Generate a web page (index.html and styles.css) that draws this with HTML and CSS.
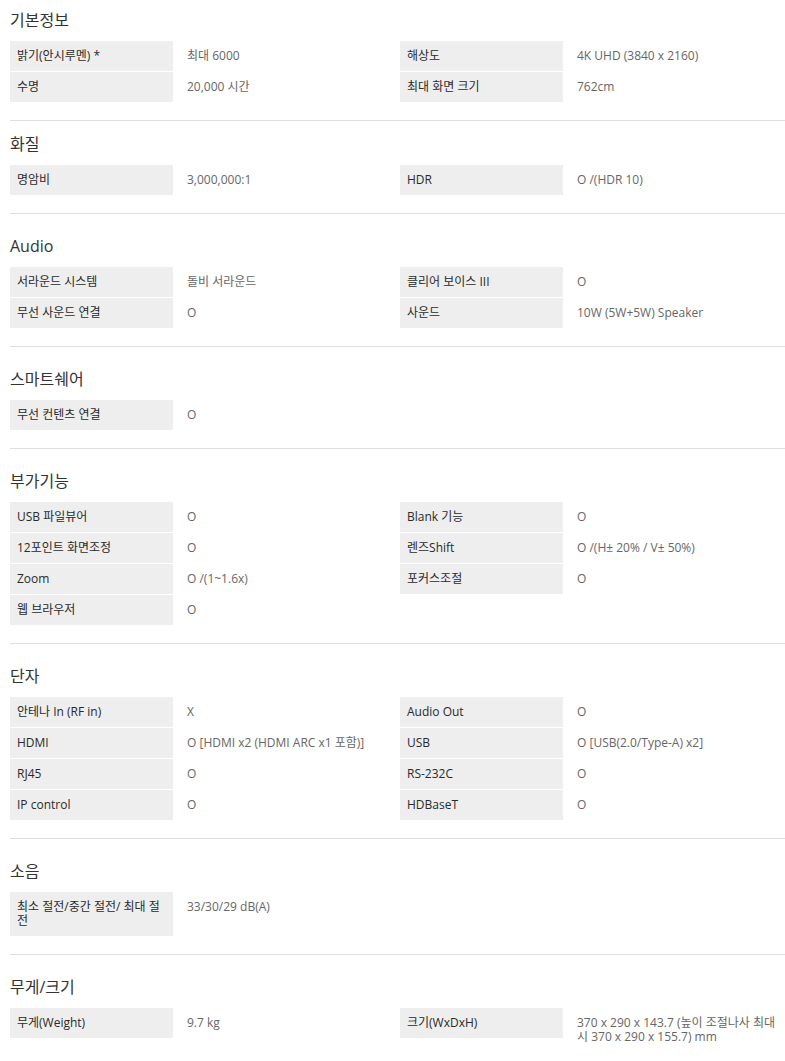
FILE: index.html
```html
<!DOCTYPE html>
<html lang="ko">
<head>
<meta charset="utf-8">
<title>제품 사양</title>
<link rel="stylesheet" href="styles.css">
</head>
<body>
<div class="specs">
  <section class="spec-section spec-section--first">
    <h2 class="spec-title">기본정보</h2>
    <dl class="spec-grid">
      <dt class="spec-label">밝기(안시루멘) *</dt><dd class="spec-value">최대 6000</dd>
      <dt class="spec-label">해상도</dt><dd class="spec-value">4K UHD (3840 x 2160)</dd>
      <dt class="spec-label">수명</dt><dd class="spec-value">20,000 시간</dd>
      <dt class="spec-label">최대 화면 크기</dt><dd class="spec-value">762cm</dd>
    </dl>
  </section>

  <section class="spec-section spec-section--tight">
    <h2 class="spec-title">화질</h2>
    <dl class="spec-grid">
      <dt class="spec-label">명암비</dt><dd class="spec-value">3,000,000:1</dd>
      <dt class="spec-label">HDR</dt><dd class="spec-value">O /(HDR 10)</dd>
    </dl>
  </section>

  <section class="spec-section">
    <h2 class="spec-title">Audio</h2>
    <dl class="spec-grid">
      <dt class="spec-label">서라운드 시스템</dt><dd class="spec-value">돌비 서라운드</dd>
      <dt class="spec-label">클리어 보이스 III</dt><dd class="spec-value">O</dd>
      <dt class="spec-label">무선 사운드 연결</dt><dd class="spec-value">O</dd>
      <dt class="spec-label">사운드</dt><dd class="spec-value">10W (5W+5W) Speaker</dd>
    </dl>
  </section>

  <section class="spec-section">
    <h2 class="spec-title">스마트쉐어</h2>
    <dl class="spec-grid">
      <dt class="spec-label">무선 컨텐츠 연결</dt><dd class="spec-value">O</dd>
    </dl>
  </section>

  <section class="spec-section">
    <h2 class="spec-title">부가기능</h2>
    <dl class="spec-grid">
      <dt class="spec-label">USB 파일뷰어</dt><dd class="spec-value">O</dd>
      <dt class="spec-label">Blank 기능</dt><dd class="spec-value">O</dd>
      <dt class="spec-label">12포인트 화면조정</dt><dd class="spec-value">O</dd>
      <dt class="spec-label">렌즈Shift</dt><dd class="spec-value">O /(H± 20% / V± 50%)</dd>
      <dt class="spec-label">Zoom</dt><dd class="spec-value">O /(1~1.6x)</dd>
      <dt class="spec-label">포커스조절</dt><dd class="spec-value">O</dd>
      <dt class="spec-label">웹 브라우저</dt><dd class="spec-value">O</dd>
    </dl>
  </section>

  <section class="spec-section">
    <h2 class="spec-title">단자</h2>
    <dl class="spec-grid">
      <dt class="spec-label">안테나 In (RF in)</dt><dd class="spec-value">X</dd>
      <dt class="spec-label">Audio Out</dt><dd class="spec-value">O</dd>
      <dt class="spec-label">HDMI</dt><dd class="spec-value">O [HDMI x2 (HDMI ARC x1 포함)]</dd>
      <dt class="spec-label">USB</dt><dd class="spec-value">O [USB(2.0/Type-A) x2]</dd>
      <dt class="spec-label">RJ45</dt><dd class="spec-value">O</dd>
      <dt class="spec-label">RS-232C</dt><dd class="spec-value">O</dd>
      <dt class="spec-label">IP control</dt><dd class="spec-value">O</dd>
      <dt class="spec-label">HDBaseT</dt><dd class="spec-value">O</dd>
    </dl>
  </section>

  <section class="spec-section">
    <h2 class="spec-title">소음</h2>
    <dl class="spec-grid">
      <dt class="spec-label">최소 절전/중간 절전/ 최대 절전</dt><dd class="spec-value">33/30/29 dB(A)</dd>
    </dl>
  </section>

  <section class="spec-section spec-section--last">
    <h2 class="spec-title">무게/크기</h2>
    <dl class="spec-grid">
      <dt class="spec-label">무게(Weight)</dt><dd class="spec-value">9.7 kg</dd>
      <dt class="spec-label">크기(WxDxH)</dt><dd class="spec-value">370 x 290 x 143.7 (높이 조절나사 최대 시 370 x 290 x 155.7) mm</dd>
    </dl>
  </section>
</div>
</body>
</html>
```

FILE: styles.css
```css
html, body {
  margin: 0;
  padding: 0;
  background: #ffffff;
}

body {
  font-family: "Open Sans", "Noto Sans CJK KR", sans-serif;
  color: #333333;
}

.specs {
  margin-left: 10px;
}

.spec-section {
  padding: 21px 0 18px;
  border-bottom: 1px solid #dedede;
}

.spec-section--first {
  padding-top: 9px;
}

.spec-section--tight {
  padding-top: 12px;
}

.spec-section--last {
  border-bottom: none;
}

.spec-title {
  margin: 0 0 10px;
  font-size: 16px;
  line-height: 22px;
  font-weight: 400;
  color: #333333;
}

.spec-grid {
  margin: 0;
  display: grid;
  grid-template-columns: 163px 227px 163px 1fr;
  row-gap: 1px;
  align-items: start;
}

.spec-label {
  background: #eeeeee;
  padding: 8px 10px 8px 7px;
  font-size: 12px;
  line-height: 14px;
  font-weight: 400;
  color: #2a2a2a;
  word-break: break-all;
}

.spec-value {
  margin: 0;
  padding: 8px 10px 8px 14px;
  font-size: 12px;
  line-height: 14px;
  color: #666666;
}
```
